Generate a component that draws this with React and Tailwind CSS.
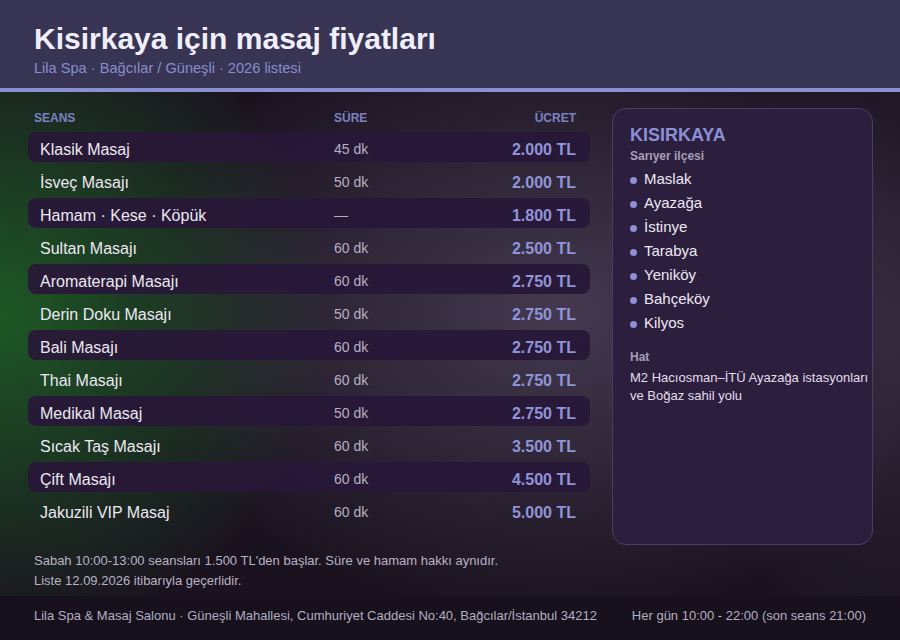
import React from 'react';

const seanslar = [
  { ad: 'Klasik Masaj', sure: '45 dk', ucret: '2.000 TL' },
  { ad: 'İsveç Masajı', sure: '50 dk', ucret: '2.000 TL' },
  { ad: 'Hamam · Kese · Köpük', sure: '—', ucret: '1.800 TL' },
  { ad: 'Sultan Masajı', sure: '60 dk', ucret: '2.500 TL' },
  { ad: 'Aromaterapi Masajı', sure: '60 dk', ucret: '2.750 TL' },
  { ad: 'Derin Doku Masajı', sure: '50 dk', ucret: '2.750 TL' },
  { ad: 'Bali Masajı', sure: '60 dk', ucret: '2.750 TL' },
  { ad: 'Thai Masajı', sure: '60 dk', ucret: '2.750 TL' },
  { ad: 'Medikal Masaj', sure: '50 dk', ucret: '2.750 TL' },
  { ad: 'Sıcak Taş Masajı', sure: '60 dk', ucret: '3.500 TL' },
  { ad: 'Çift Masajı', sure: '60 dk', ucret: '4.500 TL' },
  { ad: 'Jakuzili VIP Masaj', sure: '60 dk', ucret: '5.000 TL' },
];

const semtler = ['Maslak', 'Ayazağa', 'İstinye', 'Tarabya', 'Yeniköy', 'Bahçeköy', 'Kilyos'];

const App = () => {
  return (
    <div className="w-[900px] h-[640px] flex flex-col overflow-hidden bg-[#1a131f] font-['Liberation_Sans',Arial,sans-serif]">
      {/* Header */}
      <div className="h-[92px] shrink-0 bg-[#373454] border-b-4 border-[#8a8fd2] px-[34px] pt-[22px]">
        <h1 className="text-[30px] leading-[34px] font-bold text-[#efeefa]">Kisirkaya için masaj fiyatları</h1>
        <div className="mt-[3px] text-[14.6px] leading-[18px] text-[#8a8dcc]">Lila Spa · Bağcılar / Güneşli · 2026 listesi</div>
      </div>

      {/* Main */}
      <div className="flex-1 flex gap-[22px] pl-[28px] pr-[27px] pt-[16px] bg-[radial-gradient(ellipse_330px_320px_at_0%_44%,rgba(30,100,38,0.85),transparent),radial-gradient(ellipse_440px_300px_at_62%_44%,rgba(80,68,94,0.78),transparent),radial-gradient(ellipse_220px_320px_at_100%_48%,rgba(62,52,74,0.55),transparent)]">
        {/* Price table */}
        <div className="w-[562px] shrink-0 flex flex-col pt-[2px]">
          <div className="grid grid-cols-[300px_1fr_auto] pl-[6px] pr-[14px] h-[16px] mb-[6px] text-[12px] leading-[16px] font-bold text-[#7d81c4]">
            <span>SEANS</span>
            <span>SÜRE</span>
            <span className="text-right">ÜCRET</span>
          </div>
          <div className="flex flex-col gap-[3px]">
            {seanslar.map((s, i) => (
              <div
                key={s.ad}
                className={
                  'grid grid-cols-[294px_1fr_auto] items-center h-[30px] pt-[5px] pl-[12px] pr-[14px] rounded-[8px] ' +
                  (i % 2 === 0 ? 'bg-[rgba(40,24,56,0.93)]' : '')
                }
              >
                <span className="text-[16px] text-[#ece8f2]">{s.ad}</span>
                <span className="text-[14px] text-[#b6b0c2]">{s.sure}</span>
                <span className="text-[16px] font-bold text-[#9094d8] text-right">{s.ucret}</span>
              </div>
            ))}
          </div>
          <div className="mt-[26px] pl-[6px] text-[13px] leading-[20px] text-[#b8b3c4]">
            <div>Sabah 10:00-13:00 seansları 1.500 TL'den başlar. Süre ve hamam hakkı aynıdır.</div>
            <div>Liste 12.09.2026 itibarıyla geçerlidir.</div>
          </div>
        </div>

        {/* Area card */}
        <div className="w-[261px] h-[437px] shrink-0 rounded-[14px] border border-[#4a3e62] bg-[#2c1f3e] pl-[17px] pr-0 pt-[15px]">
          <div className="text-[18px] leading-[22px] font-bold text-[#8b8fd6]">KISIRKAYA</div>
          <div className="mt-[2px] text-[12px] leading-[16px] font-bold text-[#a69fb8]">Sarıyer ilçesi</div>
          <ul className="mt-[3px]">
            {semtler.map((s) => (
              <li key={s} className="flex items-center gap-[7px] h-[24px] text-[15px] text-[#ece8f2]">
                <span className="w-[7px] h-[7px] rounded-full bg-[#8d90d4] mt-[2px]"></span>
                {s}
              </li>
            ))}
          </ul>
          <div className="mt-[14px] text-[12px] leading-[16px] font-bold text-[#a69fb8]">Hat</div>
          <div className="mt-[4px] text-[13px] leading-[18px] text-[#e2deea]">
            M2 Hacıosman–İTÜ Ayazağa istasyonları ve Boğaz sahil yolu
          </div>
        </div>
      </div>

      {/* Footer */}
      <div className="h-[44px] shrink-0 bg-[#17111d] flex items-start justify-between px-[34px] pt-[10px] text-[13px] leading-[20px] text-[#b4aec0]">
        <span>Lila Spa &amp; Masaj Salonu · Güneşli Mahallesi, Cumhuriyet Caddesi No:40, Bağcılar/İstanbul 34212</span>
        <span>Her gün 10:00 - 22:00 (son seans 21:00)</span>
      </div>
    </div>
  );
};

export default App;
